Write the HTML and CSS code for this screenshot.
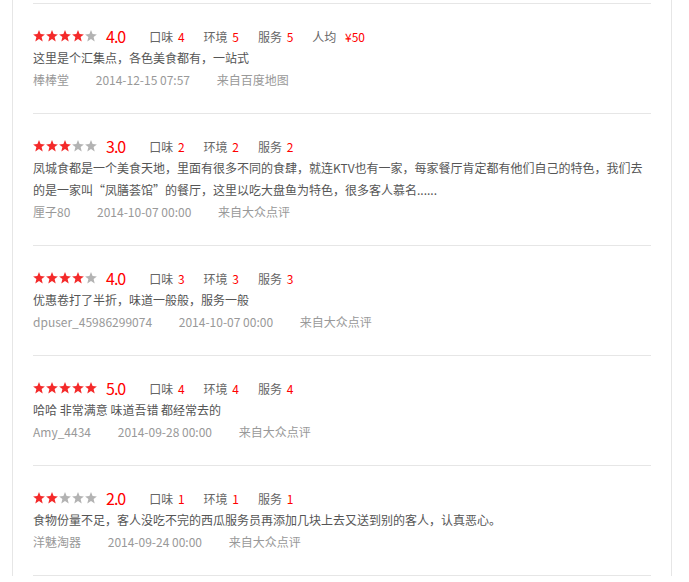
FILE: index.html
```html
<!DOCTYPE html>
<html lang="zh-CN">
<head>
    <meta charset="UTF-8">
    <meta name="viewport" content="width=device-width, initial-scale=1.0">
    <title>网友点评</title>
    <link rel="stylesheet" href="styles.css">
</head>
<body>
    <div class="panel">
        <ul class="review-list">
            <li class="review">
                <div class="rating">
                    <span class="stars" data-score="4"></span>
                    <span class="score">4.0</span>
                    <span class="sub">口味 <em>4</em></span>
                    <span class="sub">环境 <em>5</em></span>
                    <span class="sub">服务 <em>5</em></span>
                    <span class="sub">人均 <em class="price">¥50</em></span>
                </div>
                <p class="comment">这里是个汇集点，各色美食都有，一站式</p>
                <div class="meta">
                    <span>棒棒堂</span>
                    <span>2014-12-15 07:57</span>
                    <span>来自百度地图</span>
                </div>
            </li>
            <li class="review">
                <div class="rating">
                    <span class="stars" data-score="3"></span>
                    <span class="score">3.0</span>
                    <span class="sub">口味 <em>2</em></span>
                    <span class="sub">环境 <em>2</em></span>
                    <span class="sub">服务 <em>2</em></span>
                </div>
                <p class="comment">凤城食都是一个美食天地，里面有很多不同的食肆，就连KTV也有一家，每家餐厅肯定都有他们自己的特色，我们去的是一家叫“凤膳荟馆”的餐厅，这里以吃大盘鱼为特色，很多客人慕名......</p>
                <div class="meta">
                    <span>厘子80</span>
                    <span>2014-10-07 00:00</span>
                    <span>来自大众点评</span>
                </div>
            </li>
            <li class="review">
                <div class="rating">
                    <span class="stars" data-score="4"></span>
                    <span class="score">4.0</span>
                    <span class="sub">口味 <em>3</em></span>
                    <span class="sub">环境 <em>3</em></span>
                    <span class="sub">服务 <em>3</em></span>
                </div>
                <p class="comment">优惠卷打了半折，味道一般般，服务一般</p>
                <div class="meta">
                    <span>dpuser_45986299074</span>
                    <span>2014-10-07 00:00</span>
                    <span>来自大众点评</span>
                </div>
            </li>
            <li class="review">
                <div class="rating">
                    <span class="stars" data-score="5"></span>
                    <span class="score">5.0</span>
                    <span class="sub">口味 <em>4</em></span>
                    <span class="sub">环境 <em>4</em></span>
                    <span class="sub">服务 <em>4</em></span>
                </div>
                <p class="comment">哈哈 非常满意 味道吾错 都经常去的</p>
                <div class="meta">
                    <span>Amy_4434</span>
                    <span>2014-09-28 00:00</span>
                    <span>来自大众点评</span>
                </div>
            </li>
            <li class="review">
                <div class="rating">
                    <span class="stars" data-score="2"></span>
                    <span class="score">2.0</span>
                    <span class="sub">口味 <em>1</em></span>
                    <span class="sub">环境 <em>1</em></span>
                    <span class="sub">服务 <em>1</em></span>
                </div>
                <p class="comment">食物份量不足，客人没吃不完的西瓜服务员再添加几块上去又送到别的客人，认真恶心。</p>
                <div class="meta">
                    <span>洋魅淘器</span>
                    <span>2014-09-24 00:00</span>
                    <span>来自大众点评</span>
                </div>
            </li>
        </ul>
    </div>

    <script>
        // draw the star icons for each rating
        let starPath = "M6 0.1 L7.6 4.1 L11.9 4.4 L8.6 7.1 L9.7 11.4 L6 9 L2.3 11.4 L3.4 7.1 L0.1 4.4 L4.4 4.1 Z";
        document.querySelectorAll(".stars").forEach(el => {
            let score = parseInt(el.dataset.score);
            let html = "";
            for (let i = 0; i < 5; i++) {
                let cls = i < score ? "on" : "off";
                html += `<svg class="star ${cls}" width="12" height="12" viewBox="0 0 12 12"><path d="${starPath}"/></svg>`;
            }
            el.innerHTML = html;
        });
    </script>
</body>
</html>
```

FILE: styles.css
```css
body {
    margin: 0;
    padding: 0;
    background: #fff;
    font-family: "Microsoft YaHei", "Noto Sans CJK SC", sans-serif;
    font-size: 12px;
    color: #666;
}
.panel {
    width: 660px;
    box-sizing: border-box;
    margin-left: 12px;
    padding: 3px 20px 0;
    border-left: 1px solid #e6e6e6;
    border-right: 1px solid #e6e6e6;
}
.review-list {
    list-style: none;
    margin: 0;
    padding: 0;
    border-top: 1px solid #e6e6e6;
}
.review {
    padding: 21px 0 22px;
    border-bottom: 1px solid #e6e6e6;
}
.rating {
    display: flex;
    align-items: center;
    height: 22px;
}
.stars {
    display: flex;
    gap: 1px;
    margin-right: 9px;
}
.star.on {
    fill: #f42a2a;
}
.star.off {
    fill: #b3b3b3;
}
.score {
    font-size: 16px;
    color: #f00;
    margin-right: 24px;
    letter-spacing: -1px;
}
.sub {
    margin-right: 19px;
    color: #666;
}
.sub em {
    font-style: normal;
    color: #f00;
    margin-left: 2px;
}
.sub em.price {
    margin-left: 6px;
}
.comment {
    margin: 0;
    line-height: 22px;
    color: #555;
}
.meta {
    line-height: 22px;
    color: #999;
}
.meta span {
    margin-right: 24px;
}
```
